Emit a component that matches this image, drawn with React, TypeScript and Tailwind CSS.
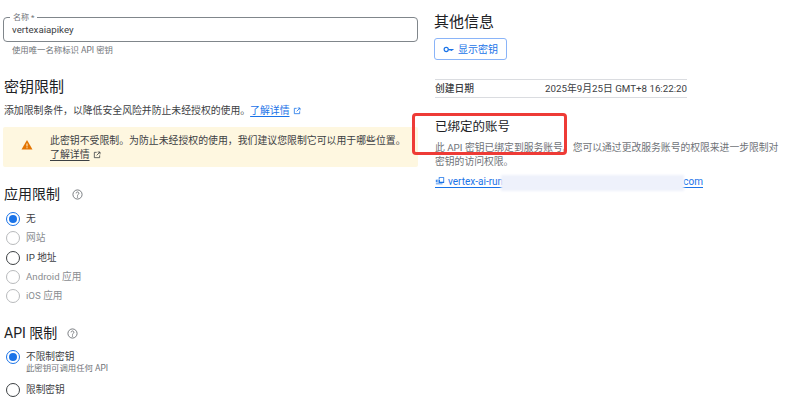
import React from "react";

const ExternalIcon = ({ className }: { className: string }) => (
  <svg viewBox="0 0 24 24" className={className} fill="none" stroke="currentColor" strokeWidth="2.4">
    <path d="M11 4H4v16h16v-7" />
    <path d="M14 3h7v7M21 3l-10 10" />
  </svg>
);

const HelpIcon = () => (
  <svg viewBox="0 0 24 24" className="w-[11px] h-[11px] text-[#5f6368]" fill="none" stroke="currentColor" strokeWidth="1.8">
    <circle cx="12" cy="12" r="10" />
    <path d="M9 9.5a3 3 0 1 1 4.6 2.5c-1 .7-1.6 1.2-1.6 2.5" />
    <circle cx="12" cy="17.5" r="0.6" fill="currentColor" />
  </svg>
);

const Radio = ({ state, label, sub, muted }: { state: "on" | "off" | "disabled"; label: string; sub?: string; muted?: boolean }) => (
  <div className="flex items-start gap-[6px] h-[19.3px] pl-[3px]">
    <span
      className={
        state === "on"
          ? "mt-[2px] w-[14px] h-[14px] rounded-full border-[1.5px] border-[#1a73e8] flex items-center justify-center shrink-0"
          : state === "off"
          ? "mt-[2px] w-[14px] h-[14px] rounded-full border-[1.5px] border-[#3c4043] shrink-0"
          : "mt-[2px] w-[14px] h-[14px] rounded-full border-[1.5px] border-[#b8babc] shrink-0"
      }
    >
      {state === "on" && <span className="w-[8px] h-[8px] rounded-full bg-[#1a73e8]" />}
    </span>
    <div className="flex flex-col">
      <span className={muted ? "text-[9.7px] leading-[18px] text-[#8a8d91]" : "text-[9.7px] leading-[18px] text-[#3c4043]"}>{label}</span>
      {sub && <span className="text-[8.4px] leading-[9px] -mt-[2px] text-[#6f7378]">{sub}</span>}
    </div>
  </div>
);

export default function App() {
  return (
    <div className="relative w-[800px] h-[407px] overflow-hidden bg-white font-['Roboto','Noto_Sans_CJK_SC',sans-serif] text-[#202124]">
      <div className="flex items-start pl-[3px]">
        <div className="w-[415px] shrink-0 flex flex-col">
          <div className="relative mt-[17px] h-[25px] border border-[#80868b] rounded-[4px] pl-[8px] flex items-center">
            <span className="absolute -top-[5px] left-[6px] bg-white px-[3px] text-[8px] leading-[10px] text-[#6f7378]">名称 *</span>
            <span className="text-[9.7px] text-[#3c4043] pt-[1px]">vertexaiapikey</span>
          </div>
          <p className="mt-[1px] pl-[9px] text-[8.4px] leading-[14px] text-[#6f7378]">使用唯一名称标识 API 密钥</p>

          <h2 className="mt-[20px] pl-[1px] text-[15px] leading-[20px] text-[#202124]">密钥限制</h2>
          <p className="mt-[7px] pl-[1px] text-[9.85px] leading-[14px] text-[#3c4043] flex items-center">
            添加限制条件，以降低安全风险并防止未经授权的使用。
            <span className="text-[#1a73e8] underline underline-offset-2">了解详情</span>
            <ExternalIcon className="ml-[3px] w-[8px] h-[8px] text-[#1a73e8]" />
          </p>

          <div className="mt-[9px] h-[40px] bg-[#fef7e0] rounded-[2px] flex items-start">
            <svg viewBox="0 0 24 24" className="ml-[18px] mt-[12px] w-[12px] h-[12px] shrink-0" fill="#e37400">
              <path d="M12 2 1 21h22L12 2z" />
              <rect x="11" y="9" width="2" height="6" fill="#fef7e0" />
              <rect x="11" y="16.5" width="2" height="2" fill="#fef7e0" />
            </svg>
            <div className="ml-[17px] pt-[7px] text-[9.9px] leading-[14px] text-[#3c4043]">
              <div>此密钥不受限制。为防止未经授权的使用，我们建议您限制它可以用于哪些位置。</div>
              <div className="flex items-center">
                <span className="underline underline-offset-2">了解详情</span>
                <ExternalIcon className="ml-[3px] w-[8px] h-[8px] text-[#3c4043]" />
              </div>
            </div>
          </div>

          <div className="mt-[17px] pl-[1px] flex items-center gap-[12px]">
            <h3 className="text-[14px] leading-[20px] text-[#202124]">应用限制</h3>
            <HelpIcon />
          </div>
          <div className="mt-[6px] flex flex-col">
            <Radio state="on" label="无" />
            <Radio state="disabled" label="网站" muted />
            <Radio state="off" label="IP 地址" />
            <Radio state="disabled" label="Android 应用" muted />
            <Radio state="disabled" label="iOS 应用" muted />
          </div>

          <div className="mt-[17px] pl-[1px] flex items-center gap-[10px]">
            <h3 className="text-[14px] leading-[20px] text-[#202124]">API 限制</h3>
            <HelpIcon />
          </div>
          <div className="mt-[5px] flex flex-col">
            <div className="h-[33px]">
              <Radio state="on" label="不限制密钥" sub="此密钥可调用任何 API" />
            </div>
            <Radio state="off" label="限制密钥" />
          </div>
        </div>

        <div className="ml-[17px] w-[346px] shrink-0 flex flex-col">
          <h2 className="mt-[11px] -ml-px text-[15px] leading-[22px] text-[#202124]">其他信息</h2>
          <button className="mt-[5px] -ml-px w-[73px] h-[22px] border border-[#8ab4f8] rounded-[3px] flex items-center justify-center gap-[4px] text-[10px] text-[#1a73e8]">
            <svg viewBox="0 0 24 24" className="w-[11px] h-[11px]" fill="none" stroke="currentColor" strokeWidth="2.6">
              <circle cx="7" cy="12" r="4.5" />
              <path d="M11.5 12H23M19 12v3M15.5 12v2.5" />
            </svg>
            显示密钥
          </button>
          <div className="mt-[19px] w-[252px] h-[19px] border-y border-[#dadce0] flex items-center justify-between text-[9.75px] pt-[1px]">
            <span className="text-[#3c4043] font-medium">创建日期</span>
            <span className="text-[#3c4043]">2025年9月25日 GMT+8 16:22:20</span>
          </div>
          <h3 className="mt-[20px] text-[12.5px] leading-[18px] text-[#202124]">已绑定的账号</h3>
          <p className="mt-[5px] w-[346px] text-[9.8px] leading-[14px] text-[#6f7378]">
            此 API 密钥已绑定到服务账号。您可以通过更改服务账号的权限来进一步限制对密钥的访问权限。
          </p>
          <div className="mt-[6px] flex items-center gap-[3px] w-[268px] border-b border-[#1a73e8] h-[13px] text-[10px] leading-[13px] text-[#1a73e8]">
            <svg viewBox="0 0 24 24" className="w-[10px] h-[10px] shrink-0" fill="currentColor">
              <path d="M9 3h13v14H9v-3h11V5H11v3H9V3zM2 9h10v6H2V9zm2 2v2h6v-2H4zM2 18h16v2H2v-2z" />
            </svg>
            <span className="flex-1">vertex-ai-run</span>
            <span>com</span>
          </div>
        </div>
      </div>

      <div className="absolute left-[501px] top-[175px] w-[183px] h-[16px] bg-[#eef1fb] blur-[1px]" />
      <div className="absolute left-[412px] top-[113px] w-[155px] h-[42px] border-[3px] border-[#ee3b36] rounded-[4px]" />
    </div>
  );
}
